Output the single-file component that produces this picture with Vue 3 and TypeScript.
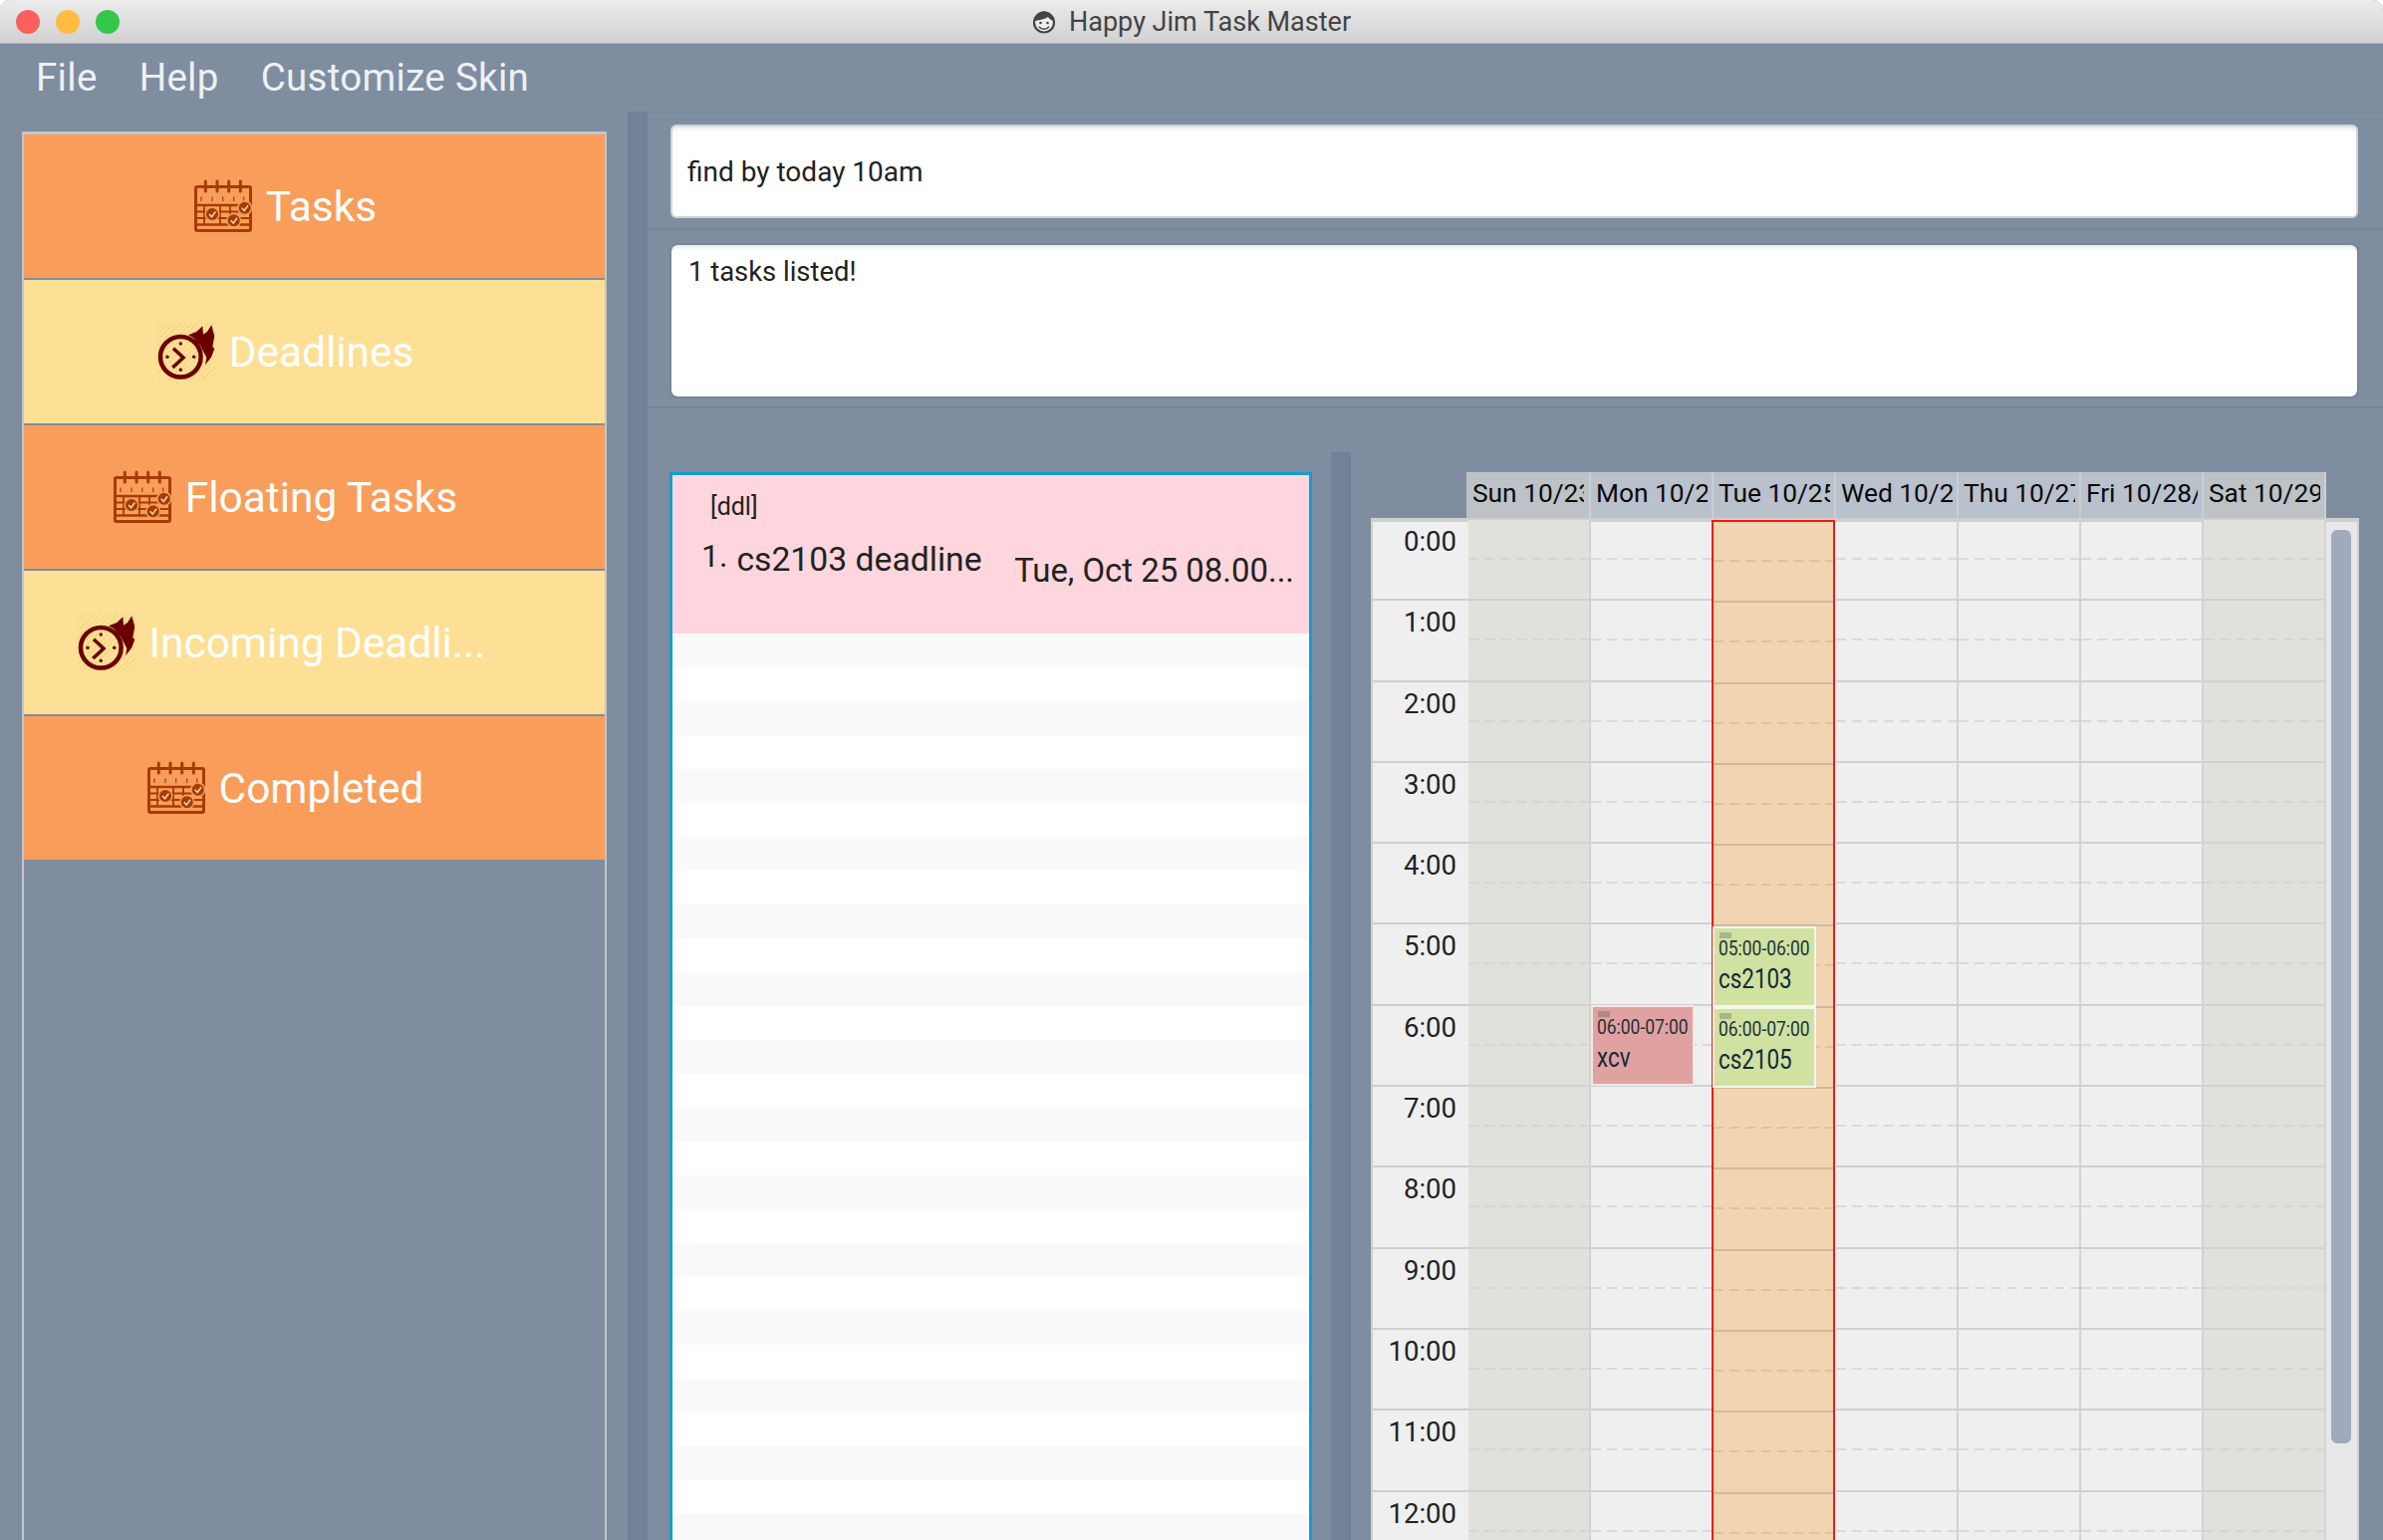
<script setup lang="ts">
interface NavItem {
  label: string;
  kind: "calendar" | "clock";
}

interface CalendarEvent {
  hour: number;
  time: string;
  name: string;
  color: "red" | "green";
}

interface Day {
  label: string;
  weekend?: boolean;
  today?: boolean;
  events: CalendarEvent[];
}

const navItems: NavItem[] = [
  { label: "Tasks", kind: "calendar" },
  { label: "Deadlines", kind: "clock" },
  { label: "Floating Tasks", kind: "calendar" },
  { label: "Incoming Deadli...", kind: "clock" },
  { label: "Completed", kind: "calendar" },
];

const days: Day[] = [
  { label: "Sun 10/23/16", weekend: true, events: [] },
  {
    label: "Mon 10/24/16",
    events: [{ hour: 6, time: "06:00-07:00", name: "xcv", color: "red" }],
  },
  {
    label: "Tue 10/25/16",
    today: true,
    events: [
      { hour: 5, time: "05:00-06:00", name: "cs2103", color: "green" },
      { hour: 6, time: "06:00-07:00", name: "cs2105", color: "green" },
    ],
  },
  { label: "Wed 10/26/16", events: [] },
  { label: "Thu 10/27/16", events: [] },
  { label: "Fri 10/28/16", events: [] },
  { label: "Sat 10/29/16", weekend: true, events: [] },
];

const hours = Array.from({ length: 13 }, (_, i) => i);
const stripes = Array.from({ length: 27 }, (_, i) => i);

// top of an event inside its day column
function eventTop(hour: number): number {
  return Math.round(hour * 81.2);
}
</script>

<template>
  <div class="window">
    <header class="titlebar">
      <i class="light light--red"></i>
      <i class="light light--yellow"></i>
      <i class="light light--green"></i>
      <div class="titlebar__title">
        <svg class="titlebar__icon" viewBox="0 0 24 24">
          <circle cx="12" cy="12.5" r="10" fill="#eee" stroke="#444" stroke-width="2.2" />
          <path d="M3 11C3 4 8 1.500 12 1.500S21 4 21 11C18 10 17 8 16 7 13 9.500 7 10 3 11Z" fill="#444" />
          <circle cx="8.500" cy="13" r="1.300" fill="#444" />
          <circle cx="15.500" cy="13" r="1.300" fill="#444" />
          <path d="M7 16.500C9 20 15 20 17 16.500" fill="none" stroke="#444" stroke-width="1.500" />
        </svg>
        <span>Happy Jim Task Master</span>
      </div>
    </header>

    <nav class="menubar">
      <span>File</span>
      <span>Help</span>
      <span>Customize Skin</span>
    </nav>

    <div class="main">
      <aside class="sidebar">
        <div
          v-for="item in navItems"
          :key="item.label"
          class="nav-item"
          :class="{
            'nav-item--yellow': item.kind === 'clock',
            'nav-item--long': item.label.endsWith('...'),
          }"
        >
          <svg v-if="item.kind === 'calendar'" class="nav-item__icon" viewBox="0 0 58 58">
            <g fill="none" stroke="#a63c02">
              <rect x="1.500" y="9.500" width="55" height="44" rx="1.500" stroke-width="3" />
              <path d="M11.300 4V14M23 4V14M34.700 4V14M46.300 4V14" stroke-width="3" stroke-linecap="round" />
              <path d="M7 19.500V24M18 19.500V24M28.700 19.500V24M39.700 19.500V24M49.700 19.500V24" stroke-width="1.200" />
              <path d="M1 28H57" stroke-width="2.600" />
              <path d="M1 34.500H57M1 41H57" stroke-width="1.800" />
              <path d="M1 47.500H57" stroke-width="2.600" />
              <path d="M10 28V47M26 28V47M36 28V41" stroke-width="1.800" />
            </g>
            <g fill="#a63c02" stroke="#f99d5a" stroke-width="1.500">
              <circle cx="18" cy="37" r="6.800" />
              <circle cx="39.700" cy="43.300" r="6.800" />
              <circle cx="50.700" cy="30.700" r="6.800" />
            </g>
            <g fill="none" stroke="#fbd9bd" stroke-width="1.500">
              <path d="M15 37L17.500 39.800 21.300 34.500" />
              <path d="M36.700 43.300L39.200 46.100 43 40.800" />
              <path d="M47.700 30.700L50.200 33.500 54 28.200" />
            </g>
          </svg>
          <svg v-else class="nav-item__icon nav-item__icon--hatched" viewBox="0 0 58 58">
            <circle cx="23.300" cy="34.300" r="20.300" fill="none" stroke="#6a0000" stroke-width="4.500" />
            <g fill="#6a0000">
              <circle cx="23.300" cy="21" r="1.700" />
              <circle cx="10" cy="34.300" r="1.700" />
              <circle cx="36.700" cy="34.300" r="1.700" />
              <circle cx="23.300" cy="47.300" r="1.700" />
              <path d="M31 12.300L39.300 9 45.300 3.300 46 11.700 50 9 54.300 2.300 57.300 13.300 55.300 24.300 57.300 25.700 54.300 34.300 48 42.300 49.300 35 46.700 30 43.300 23.300 36 15Z" />
            </g>
            <path d="M16 25.700L26 35 15.300 45" fill="none" stroke="#6a0000" stroke-width="3.600" />
          </svg>
          <span class="nav-item__label">{{ item.label }}</span>
        </div>
      </aside>

      <div class="splitter"></div>

      <div class="content">
        <section class="panel panel--command">
          <div class="command-box">find by today 10am</div>
        </section>
        <section class="panel panel--result">
          <div class="result-box">1 tasks listed!</div>
        </section>

        <section class="lower">
          <div class="task-list">
            <div class="task-card">
              <div class="task-card__tag">[ddl]</div>
              <div class="task-card__row">
                <span class="task-card__index">1.</span>
                <span class="task-card__name">cs2103 deadline</span>
                <span class="task-card__date">Tue, Oct 25 08.00...</span>
              </div>
            </div>
            <div
              v-for="n in stripes"
              :key="n"
              class="task-list__stripe"
              :class="{ 'task-list__stripe--grey': n % 2 === 0 }"
            ></div>
          </div>

          <div class="splitter splitter--inner"></div>

          <div class="calendar">
            <div class="calendar__head">
              <div
                v-for="day in days"
                :key="day.label"
                class="calendar__day-name"
                :class="{ 'calendar__day-name--weekend': day.weekend }"
              >
                <span class="calendar__day-text">{{ day.label }}</span>
              </div>
            </div>
            <div class="calendar__body">
              <div class="calendar__times">
                <div v-for="h in hours" :key="h" class="calendar__time">{{ h }}:00</div>
              </div>
              <div
                v-for="day in days"
                :key="day.label"
                class="calendar__col"
                :class="{
                  'calendar__col--weekend': day.weekend,
                  'calendar__col--today': day.today,
                }"
              >
                <div v-for="h in hours" :key="h" class="calendar__cell">
                  <div class="calendar__dash"></div>
                </div>
                <div
                  v-for="ev in day.events"
                  :key="ev.name"
                  class="event"
                  :class="'event--' + ev.color"
                  :style="{ top: eventTop(ev.hour) + 'px' }"
                >
                  <i class="event__tag"></i>
                  <div class="event__time">{{ ev.time }}</div>
                  <div class="event__name">{{ ev.name }}</div>
                </div>
              </div>
              <div class="calendar__track">
                <div class="calendar__thumb"></div>
              </div>
            </div>
          </div>
        </section>
      </div>
    </div>
  </div>
</template>

<style>
html,
body {
  margin: 0;
  background: #fff;
  overflow: hidden;
}
</style>

<style scoped>
.window {
  height: 1546px;
  display: flex;
  flex-direction: column;
  overflow: hidden;
  background: #7f8da0;
  border-radius: 10px 10px 0 0;
  font-family: Roboto, "Liberation Sans", sans-serif;
}

.titlebar {
  position: relative;
  flex: none;
  height: 44px;
  box-sizing: border-box;
  padding-left: 16px;
  display: flex;
  align-items: center;
  gap: 16px;
  background: linear-gradient(#ececec, #d1d1d1);
  border-bottom: 1px solid #b1b1b1;
}
.light {
  width: 24px;
  height: 24px;
  border-radius: 50%;
}
.light--red {
  background: #fc605c;
}
.light--yellow {
  background: #fdbc40;
}
.light--green {
  background: #34c84a;
}
.titlebar__title {
  position: absolute;
  left: 1036px;
  top: 5px;
  display: flex;
  align-items: center;
  gap: 13px;
  font-size: 27px;
  line-height: 34px;
  color: #444;
}
.titlebar__icon {
  width: 24px;
  height: 24px;
}

.menubar {
  flex: none;
  height: 68px;
  box-sizing: border-box;
  padding: 12px 0 0 36px;
  display: flex;
  gap: 42px;
  font-size: 38.500px;
  letter-spacing: 0.3px;
  line-height: 44px;
  color: #eef0f3;
}

.main {
  flex: 1;
  min-height: 0;
  display: flex;
}

.sidebar {
  flex: none;
  width: 587px;
  margin: 20px 0 0 22px;
  box-sizing: border-box;
  border: 2px solid #c3c6ca;
  border-top-width: 3px;
  border-bottom: 0;
}
.nav-item {
  height: 144px;
  margin-bottom: 2px;
  box-sizing: border-box;
  padding-right: 58px;
  display: flex;
  align-items: center;
  justify-content: center;
  gap: 14px;
  background: #f99d5a;
  color: #fff;
  font-size: 42.400px;
}
.nav-item--yellow {
  background: #fde095;
}
.nav-item--long {
  padding-right: 66px;
}
.nav-item__icon {
  flex: none;
  width: 58px;
  height: 58px;
}
.nav-item__icon--hatched {
  background: repeating-linear-gradient(135deg, rgba(190, 150, 60, 0.14) 0 1px, transparent 1px 4px);
}

.splitter {
  flex: none;
  width: 20px;
  margin-left: 21px;
  background: #728198;
}
.splitter--inner {
  margin-left: 19px;
  margin-top: 44px;
}

.content {
  flex: 1;
  min-width: 0;
  display: flex;
  flex-direction: column;
}

.panel {
  flex: none;
  box-sizing: border-box;
  border-bottom: 2px solid #76859a;
}
.panel--command {
  height: 119px;
  padding: 12px 25px 0 23px;
  border-top: 1px solid #76859a;
}
.panel--result {
  height: 179px;
  padding: 15px 26px 0 24px;
}
.command-box,
.result-box {
  box-sizing: border-box;
  background: #fff;
  border-radius: 6px;
  color: #222;
}
.command-box {
  height: 94px;
  padding: 0 15px;
  border: 2px solid #d0d3d7;
  box-shadow: inset 0 4px 4px -2px #e6e6e6;
  font-size: 28px;
  line-height: 92px;
}
.result-box {
  height: 152px;
  padding: 12px 17px;
  box-shadow: inset 0 4px 4px -2px #e6e6e6;
  outline: 2px solid #76859a;
  font-size: 27.400px;
  line-height: 30px;
}

.lower {
  flex: 1;
  min-height: 0;
  display: flex;
}

.task-list {
  flex: none;
  width: 645px;
  margin: 64px 0 0 22px;
  box-sizing: border-box;
  border: 3px solid #0f9fd0;
  border-bottom: 0;
  background: #fff;
}
.task-card {
  height: 159px;
  box-sizing: border-box;
  padding: 18px 15px 0 29px;
  background: #ffd6de;
  color: #222;
}
.task-card__tag {
  padding-left: 9px;
  font-size: 25px;
  line-height: 28px;
}
.task-card__row {
  margin-top: 16px;
  display: flex;
  align-items: flex-start;
}
.task-card__index {
  margin-top: -1px;
  font-size: 32px;
  line-height: 40px;
}
.task-card__name {
  margin-left: 9px;
  padding-top: 1px;
  font-size: 33.700px;
  line-height: 44px;
}
.task-card__date {
  margin-left: auto;
  padding-top: 13px;
  font-size: 32.900px;
  line-height: 42px;
}
.task-list__stripe {
  height: 34px;
}
.task-list__stripe--grey {
  background: #f9f9f9;
}

.calendar {
  flex: none;
  width: 992px;
  margin: 64px 0 0 20px;
}
.calendar__head {
  height: 46px;
  padding-left: 96px;
  display: flex;
}
.calendar__day-name {
  flex: none;
  width: 123px;
  box-sizing: border-box;
  padding-left: 5px;
  border-right: 2px solid #cbcfd5;
  background: #b9c1cd;
  color: #0a0a0a;
  font-size: 26.300px;
  line-height: 42px;
}
.calendar__day-name:first-child {
  width: 125px;
  padding-left: 6px;
}
.calendar__day-name--weekend {
  background: #bdc2c6;
}
.calendar__day-text {
  display: block;
  width: 112px;
  white-space: nowrap;
  overflow: hidden;
}

.calendar__body {
  display: flex;
  box-sizing: border-box;
  height: 1200px;
  border: 2px solid #cfcfcf;
  border-top-width: 4px;
  border-bottom: 0;
  background: #efefef;
}
.calendar__times {
  flex: none;
  width: 96px;
  margin-top: -2px;
}
.calendar__time {
  height: 81.3px;
  box-sizing: border-box;
  padding: 6px 12px 0 0;
  border-bottom: 2px solid #cfcfcf;
  color: #222;
  font-size: 27.500px;
  line-height: 32px;
  text-align: right;
}
.calendar__col {
  position: relative;
  flex: none;
  width: 123px;
  margin-top: -2px;
  box-sizing: border-box;
  border-right: 2px solid #d2d2d2;
}
.calendar__col--weekend {
  background: #e0e1db;
}
.calendar__col--today {
  border: 2px solid #f21a12;
  border-bottom: 0;
  background: #f2d4b2;
  margin: -2px 1px 0 -2px;
  width: 124px;
}
.calendar__cell {
  height: 81.3px;
  box-sizing: border-box;
  padding-top: 38px;
  border-bottom: 2px solid rgba(0, 0, 0, 0.13);
}
.calendar__col--weekend .calendar__cell {
  border-bottom-color: rgba(0, 0, 0, 0.06);
}
.calendar__dash {
  height: 2px;
  background: repeating-linear-gradient(to right, rgba(0, 0, 0, 0.09) 0 10px, transparent 10px 16px);
}
.calendar__col--weekend .calendar__dash {
  background: repeating-linear-gradient(to right, rgba(0, 0, 0, 0.05) 0 10px, transparent 10px 16px);
}
.calendar__track {
  flex: none;
  width: 31px;
  padding: 8px 6px 0 5px;
  box-sizing: border-box;
  background: #e8e8e8;
}
.calendar__thumb {
  height: 917px;
  background: #9faabb;
  border-radius: 6px;
}

.event {
  position: absolute;
  left: -1px;
  width: 104px;
  height: 81px;
  box-sizing: border-box;
  padding: 10px 0 0 4px;
  overflow: hidden;
  color: #25303a;
}
.event--green {
  background: #cfe2a2;
  border: 2px solid #f4f6ec;
}
.event--red {
  background: #dfa2a0;
  border: 2px solid #f6e5e5;
  left: 0;
}
.event__tag {
  position: absolute;
  left: 5px;
  top: 4px;
  width: 12px;
  height: 6px;
  background: rgba(70, 70, 70, 0.28);
}
.event__time,
.event__name {
  transform: scaleX(0.83);
  transform-origin: left center;
  white-space: nowrap;
}
.event__time {
  font-size: 21px;
  line-height: 20px;
}
.event__name {
  margin-top: 6px;
  font-size: 27px;
  line-height: 30px;
  color: #182838;
}
</style>
